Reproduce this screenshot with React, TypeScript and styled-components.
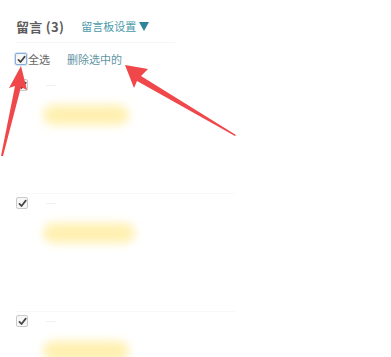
import { styled, createGlobalStyle } from 'styled-components';

const GlobalStyle = createGlobalStyle`
  html, body {
    margin: 0;
    padding: 0;
    background: #fff;
  }
  body {
    font-family: "Noto Sans CJK SC", "Noto Sans", sans-serif;
  }
`;

const messages = [{ id: 1, blob: 86 }, { id: 2, blob: 92 }, { id: 3, blob: 86 }];

function Check({ focused }: { focused?: boolean }) {
  return (
    <Box $focused={focused}>
      <svg width="9" height="9" viewBox="0 0 10 10">
        <path d="M1.6 5.4 L3.9 7.8 L8.6 1.8" fill="none" stroke="#444" strokeWidth="1.9" strokeLinecap="round" strokeLinejoin="round" />
      </svg>
    </Box>
  );
}

export default function App() {
  return (
    <>
      <GlobalStyle />
      <Page>
        <Header>
          <Title>留言 (3)</Title>
          <Settings>
            留言板设置
            <svg width="10" height="9" viewBox="0 0 10 9">
              <path d="M0 0 H10 L5 9 Z" fill="#2f849a" />
            </svg>
          </Settings>
        </Header>
        <Toolbar>
          <SelectAll>
            <Check focused />
            全选
          </SelectAll>
          <DeleteLink>删除选中的</DeleteLink>
        </Toolbar>
        <List>
          {messages.map(m => (
            <Item key={m.id}>
              <ItemHead>
                <Check />
                <Author />
              </ItemHead>
              <Blob style={{ width: m.blob }} />
            </Item>
          ))}
        </List>
        <Arrows width="391" height="357" viewBox="0 0 391 357">
          <path d="M21 66 L27 90 L21 87 L3 156 L1 156 L15 86 L9 88 Z" fill="#f0474a" />
          <path d="M125 65 L148 69 L141 76 L236 135 L235 136 L137 81 L134 88 Z" fill="#f0474a" />
        </Arrows>
      </Page>
    </>
  );
}

const Page = styled.div`
  position: relative;
  width: 391px;
  height: 357px;
  overflow: hidden;
  padding: 0 0 0 15px;
  box-sizing: border-box;
`;

const Header = styled.div`
  display: flex;
  align-items: center;
  gap: 17px;
  height: 43px;
  padding-top: 10px;
  box-sizing: border-box;
  width: 160px;
  border-bottom: 1px solid #f5f5f5;
`;

const Title = styled.h2`
  margin: 0 0 0 1px;
  font-size: 13px;
  font-weight: 700;
  color: #5c5c5c;
  letter-spacing: 0.3px;
`;

const Settings = styled.a`
  display: flex;
  align-items: center;
  gap: 3px;
  font-size: 11px;
  color: #4a9aaa;
  cursor: pointer;

  svg {
    margin-top: 1px;
  }
`;

const Toolbar = styled.div`
  display: flex;
  align-items: center;
  gap: 17px;
  height: 32px;
`;

const SelectAll = styled.label`
  display: flex;
  align-items: center;
  gap: 1px;
  font-size: 11px;
  color: #666;
`;

const DeleteLink = styled.a`
  font-size: 11px;
  color: #5f95a2;
  cursor: pointer;
`;

const Box = styled.span<{ $focused?: boolean }>`
  display: inline-flex;
  align-items: center;
  justify-content: center;
  width: 10px;
  height: 10px;
  border: 1px solid ${p => (p.$focused ? '#8aaed8' : '#cacaca')};
  border-radius: 2px;
  background: #f7f7f7;
  box-shadow: ${p => (p.$focused ? '0 0 0 1px #d5e3f3' : 'none')};
`;

const List = styled.div`
  display: flex;
  flex-direction: column;
`;

const Item = styled.div`
  display: flex;
  flex-direction: column;
  height: 118px;
  box-sizing: border-box;
  border-top: 1px solid #f8f8f8;
  width: 220px;

  &:first-child {
    border-top-color: transparent;
  }
`;

const ItemHead = styled.div`
  display: flex;
  align-items: center;
  gap: 18px;
  padding-left: 1px;
  height: 18px;
`;

const Author = styled.span`
  width: 10px;
  height: 1px;
  background: #f0f0f0;
`;

const Blob = styled.div`
  margin: 11px 0 0 28px;
  height: 20px;
  border-radius: 10px;
  background: #fff0b0;
  filter: blur(5px);
`;

const Arrows = styled.svg`
  position: absolute;
  left: 0;
  top: 0;
  pointer-events: none;
`;
